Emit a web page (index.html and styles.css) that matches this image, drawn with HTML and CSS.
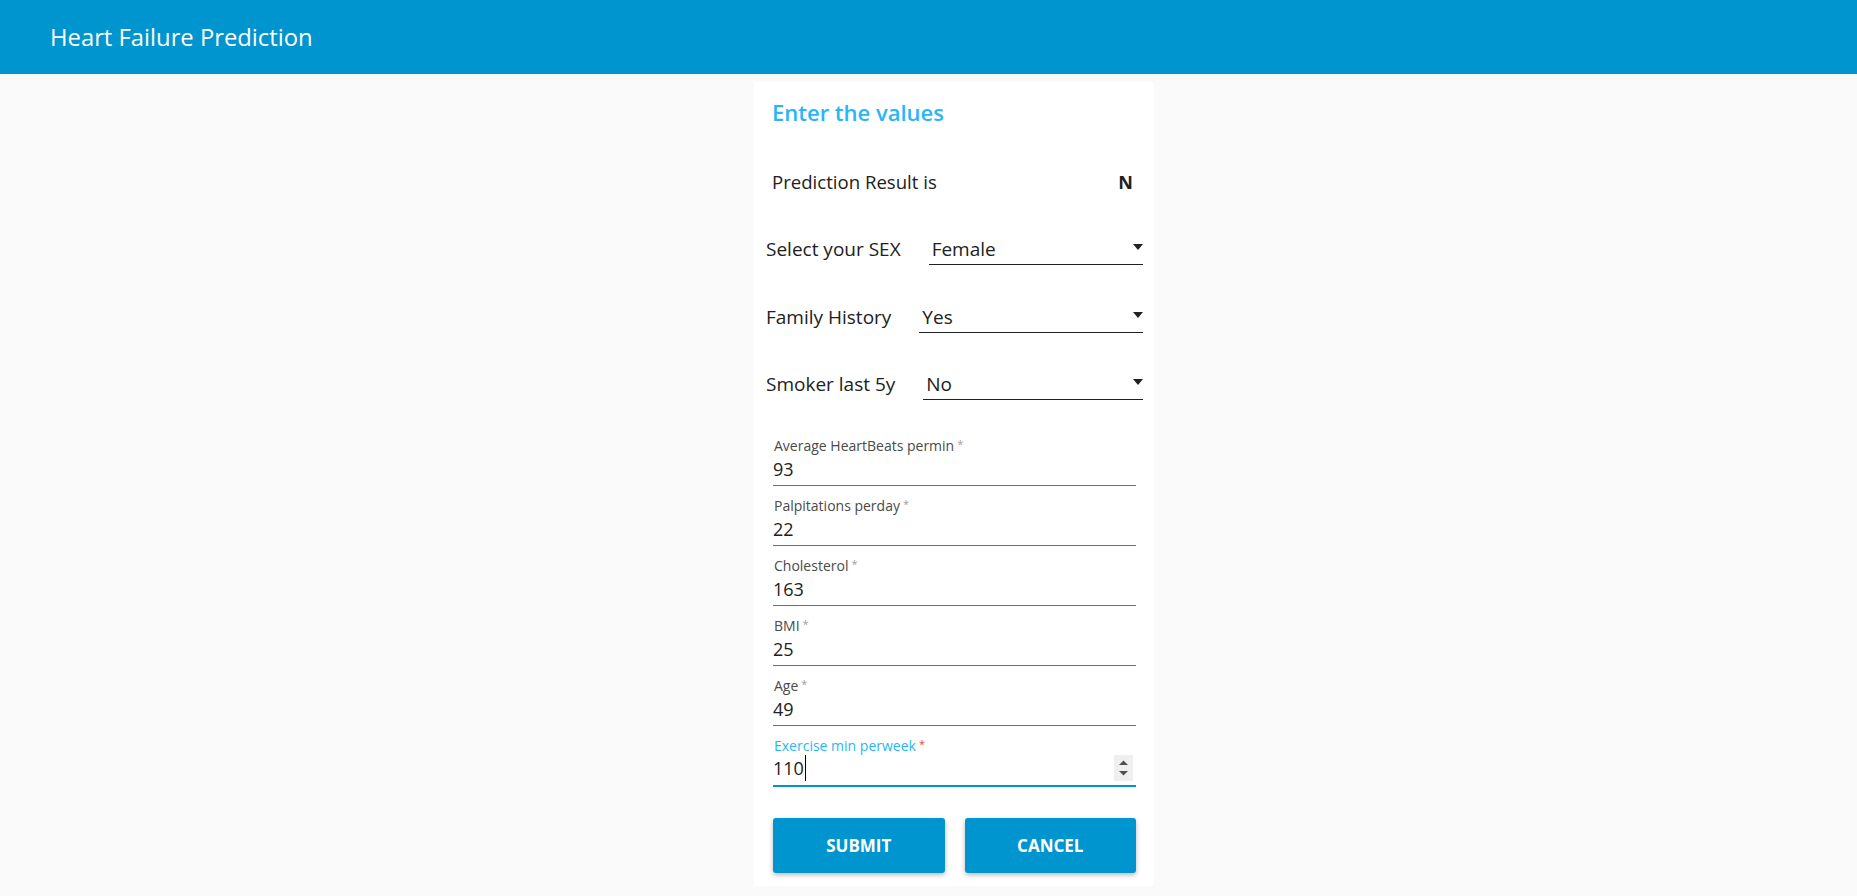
FILE: index.html
```html
<!DOCTYPE html>
<html lang="en">
<head>
<meta charset="utf-8">
<title>Heart Failure Prediction</title>
<link rel="stylesheet" href="styles.css">
</head>
<body>
<header class="topbar">
  <h1 class="app-title">Heart Failure Prediction</h1>
</header>
<main class="page">
  <section class="card">
    <h2 class="card-title">Enter the values</h2>
    <div class="result-row">
      <span class="result-label">Prediction Result is</span>
      <span class="result-value">N</span>
    </div>

    <div class="select-row first">
      <span class="select-label">Select your SEX</span>
      <div class="select-box"><span class="select-value">Female</span><span class="caret"></span></div>
    </div>
    <div class="select-row">
      <span class="select-label">Family History</span>
      <div class="select-box"><span class="select-value">Yes</span><span class="caret"></span></div>
    </div>
    <div class="select-row">
      <span class="select-label">Smoker last 5y</span>
      <div class="select-box"><span class="select-value">No</span><span class="caret"></span></div>
    </div>

    <div class="fields">
      <div class="field">
        <div class="field-label">Average HeartBeats permin<span class="req">*</span></div>
        <div class="field-input"><span class="field-value">93</span></div>
      </div>
      <div class="field">
        <div class="field-label">Palpitations perday<span class="req">*</span></div>
        <div class="field-input"><span class="field-value">22</span></div>
      </div>
      <div class="field">
        <div class="field-label">Cholesterol<span class="req">*</span></div>
        <div class="field-input"><span class="field-value">163</span></div>
      </div>
      <div class="field">
        <div class="field-label">BMI<span class="req">*</span></div>
        <div class="field-input"><span class="field-value">25</span></div>
      </div>
      <div class="field">
        <div class="field-label">Age<span class="req">*</span></div>
        <div class="field-input"><span class="field-value">49</span></div>
      </div>
      <div class="field focused">
        <div class="field-label">Exercise min perweek<span class="req">*</span></div>
        <div class="field-input">
          <span class="field-value">110<span class="text-cursor"></span></span>
          <span class="spinner">
            <svg width="19" height="26" viewBox="0 0 19 26"><path d="M5 10 L9.5 5.5 L14 10 Z" fill="#505050"/><path d="M5 16 L9.5 20.5 L14 16 Z" fill="#505050"/></svg>
          </span>
        </div>
      </div>
    </div>

    <div class="actions">
      <button class="btn">SUBMIT</button>
      <button class="btn">CANCEL</button>
    </div>
  </section>
</main>
</body>
</html>
```

FILE: styles.css
```css
* { box-sizing: border-box; }

html, body {
  margin: 0;
  padding: 0;
}

body {
  background: #fafafa;
  font-family: "Open Sans", "Noto Sans", "DejaVu Sans", sans-serif;
  color: #212121;
}

.topbar {
  height: 74px;
  background: #0095cf;
  display: flex;
  align-items: center;
  padding-left: 50px;
}

.app-title {
  margin: 0;
  font-size: 23.8px;
  font-weight: 400;
  color: #ffffff;
}

.page {
  padding-top: 8px;
  padding-left: 754px;
}

.card {
  width: 400px;
  background: #ffffff;
  padding: 16px 0 13px 0;
}

.card-title {
  margin: 0;
  padding-left: 18px;
  font-size: 22px;
  line-height: 28px;
  font-weight: 600;
  color: #29b6f6;
}

.result-row {
  margin-top: 44px;
  padding: 0 21px 0 18px;
  display: flex;
  justify-content: space-between;
  align-items: baseline;
  font-size: 18.6px;
  line-height: 24px;
}

.result-value {
  font-weight: 700;
  font-size: 18px;
}

.select-row {
  margin-top: 39.5px;
  padding: 0 11px 0 12px;
  display: flex;
  align-items: baseline;
  gap: 28px;
  font-size: 19px;
  line-height: 24px;
}

.select-row.first {
  margin-top: 43px;
}

.select-box {
  flex: 1;
  display: flex;
  justify-content: space-between;
  align-items: center;
  padding: 0 0 3px 3px;
  border-bottom: 1px solid #212121;
}

.caret {
  width: 0;
  height: 0;
  border-left: 5px solid transparent;
  border-right: 5px solid transparent;
  border-top: 6px solid #212121;
  margin-top: -4px;
}

.fields {
  margin-top: 40.5px;
  padding: 0 18px 0 19px;
}

.field + .field {
  margin-top: 15.2px;
}

.field-label {
  font-size: 14px;
  line-height: 9px;
  height: 16px;
  color: #4a4a4a;
  padding-left: 1px;
}

.req {
  color: #9e9e9e;
  font-size: 11px;
  line-height: 0;
  vertical-align: 3px;
  margin-left: 3px;
}

.field-input {
  display: flex;
  justify-content: space-between;
  align-items: flex-end;
  font-size: 18px;
  line-height: 24px;
  height: 29px;
  padding-bottom: 4px;
  border-bottom: 1px solid #0095cf;
}

.field-value {
  color: #212121;
}

.field.focused .field-label {
  color: #29b6f6;
}

.field.focused .req {
  color: #f44336;
}

.field.focused .field-input {
  height: 30px;
  border-bottom: 2px solid #0095cf;
}

.text-cursor {
  display: inline-block;
  width: 1px;
  height: 26px;
  line-height: 0;
  background: #000;
  vertical-align: -6px;
  margin-left: 1px;
}

.spinner {
  display: flex;
  width: 19px;
  height: 26px;
  margin-top: -2px;
  margin-right: 3px;
  background: #efefef;
}

.actions {
  margin-top: 31px;
  padding: 0 18px 0 19px;
  display: flex;
  gap: 20px;
}

.btn {
  flex: 1;
  height: 55px;
  border: none;
  border-radius: 3px;
  background: #0095cf;
  color: #ffffff;
  font-family: "Open Sans", "Noto Sans", sans-serif;
  font-size: 17px;
  font-weight: 700;
  box-shadow: 0 2px 5px rgba(0, 0, 0, 0.28);
}
```
